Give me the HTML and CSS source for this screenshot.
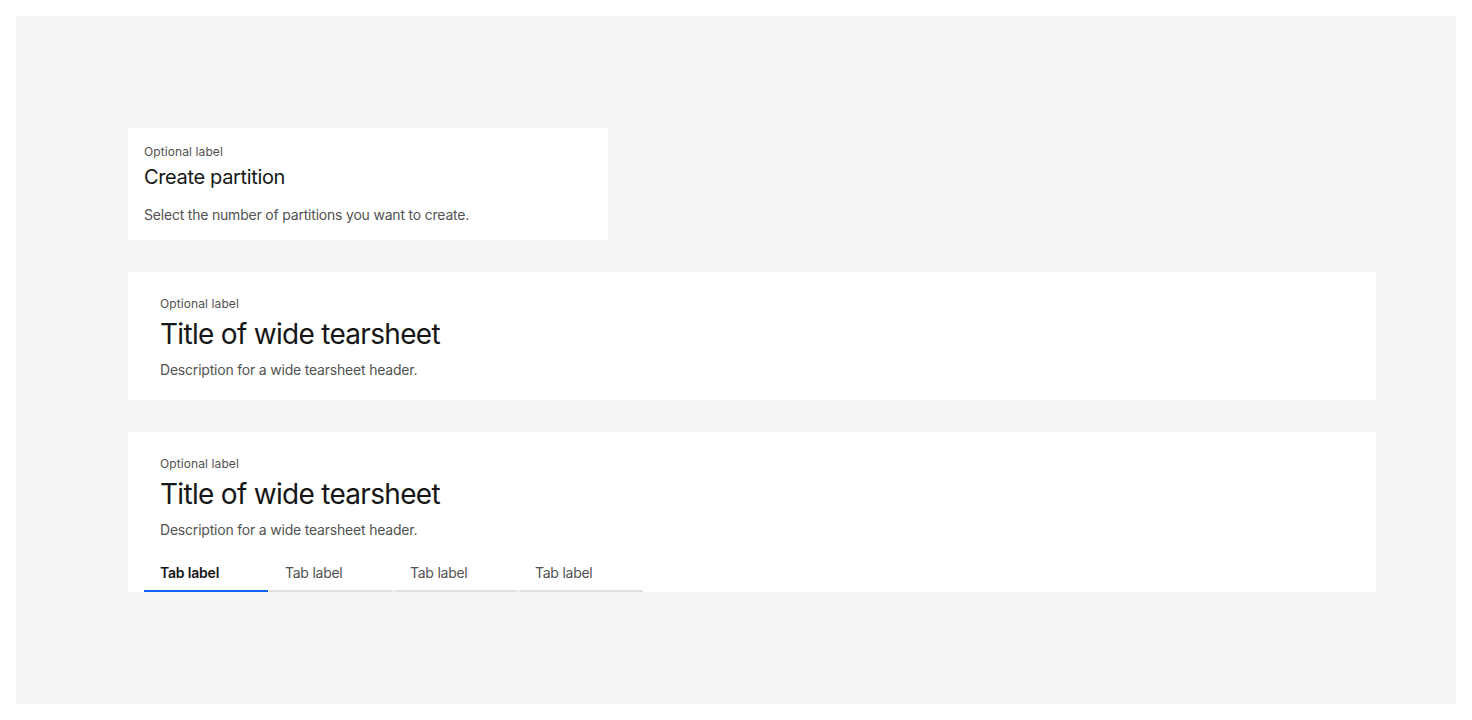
FILE: index.html
```html
<!DOCTYPE html>
<html>
<head>
<meta charset="utf-8">
<link rel="stylesheet" href="styles.css">
</head>
<body>
<div class="canvas">
  <div class="stack">
    <section class="card card-narrow">
      <div class="label">Optional label</div>
      <h2 class="title-narrow">Create partition</h2>
      <p class="desc desc-narrow">Select the number of partitions you want to create.</p>
    </section>
    <section class="card card-wide">
      <div class="label">Optional label</div>
      <h2 class="title-wide">Title of wide tearsheet</h2>
      <p class="desc desc-wide">Description for a wide tearsheet header.</p>
    </section>
    <section class="card card-wide card-tabs">
      <div class="label">Optional label</div>
      <h2 class="title-wide">Title of wide tearsheet</h2>
      <p class="desc desc-wide">Description for a wide tearsheet header.</p>
      <div class="tabs">
        <div class="tab active">Tab label</div>
        <div class="tab">Tab label</div>
        <div class="tab">Tab label</div>
        <div class="tab">Tab label</div>
      </div>
    </section>
  </div>
</div>
</body>
</html>
```
FILE: styles.css
```css
* { box-sizing: border-box; }
html, body { margin: 0; padding: 0; background: #ffffff; }
body {
  padding: 16px;
  font-family: "Inter", "Noto Sans", "Liberation Sans", sans-serif;
  color: #161616;
}
.canvas {
  background: #f4f4f4;
  height: 688px;
  padding: 112px 80px 0 112px;
}
.stack {
  display: flex;
  flex-direction: column;
  gap: 32px;
  align-items: flex-start;
}
.card {
  background: #ffffff;
}
.card-narrow {
  width: 480px;
  padding: 16px 16px 15px 16px;
}
.card-wide {
  width: 1248px;
  padding: 24px 32px 20px 32px;
}
.card-tabs {
  padding-bottom: 0;
}
.label {
  font-size: 12px;
  line-height: 16px;
  color: #525252;
  letter-spacing: 0.1px;
}
.title-narrow {
  margin: 3px 0 0 0;
  font-size: 20px;
  line-height: 28px;
  font-weight: 400;
  color: #161616;
  letter-spacing: -0.35px;
}
.title-wide {
  margin: 4px 0 0 0;
  font-size: 28px;
  line-height: 36px;
  font-weight: 400;
  color: #161616;
  letter-spacing: -0.7px;
}
.desc {
  margin: 0;
  font-size: 14px;
  line-height: 20px;
  color: #525252;
  letter-spacing: -0.2px;
}
.desc-narrow { margin-top: 14px; }
.desc-wide { margin-top: 8px; }
.tabs {
  display: flex;
  gap: 1px;
  margin: 12px 0 0 -16px;
}
.tab {
  width: 124px;
  padding: 12px 16px 8px 16px;
  font-size: 14px;
  line-height: 18px;
  color: #525252;
  border-bottom: 2px solid #e0e0e0;
  letter-spacing: -0.25px;
}
.tab.active {
  color: #161616;
  font-weight: 600;
  border-bottom-color: #0f62fe;
  letter-spacing: -0.2px;
}
```
